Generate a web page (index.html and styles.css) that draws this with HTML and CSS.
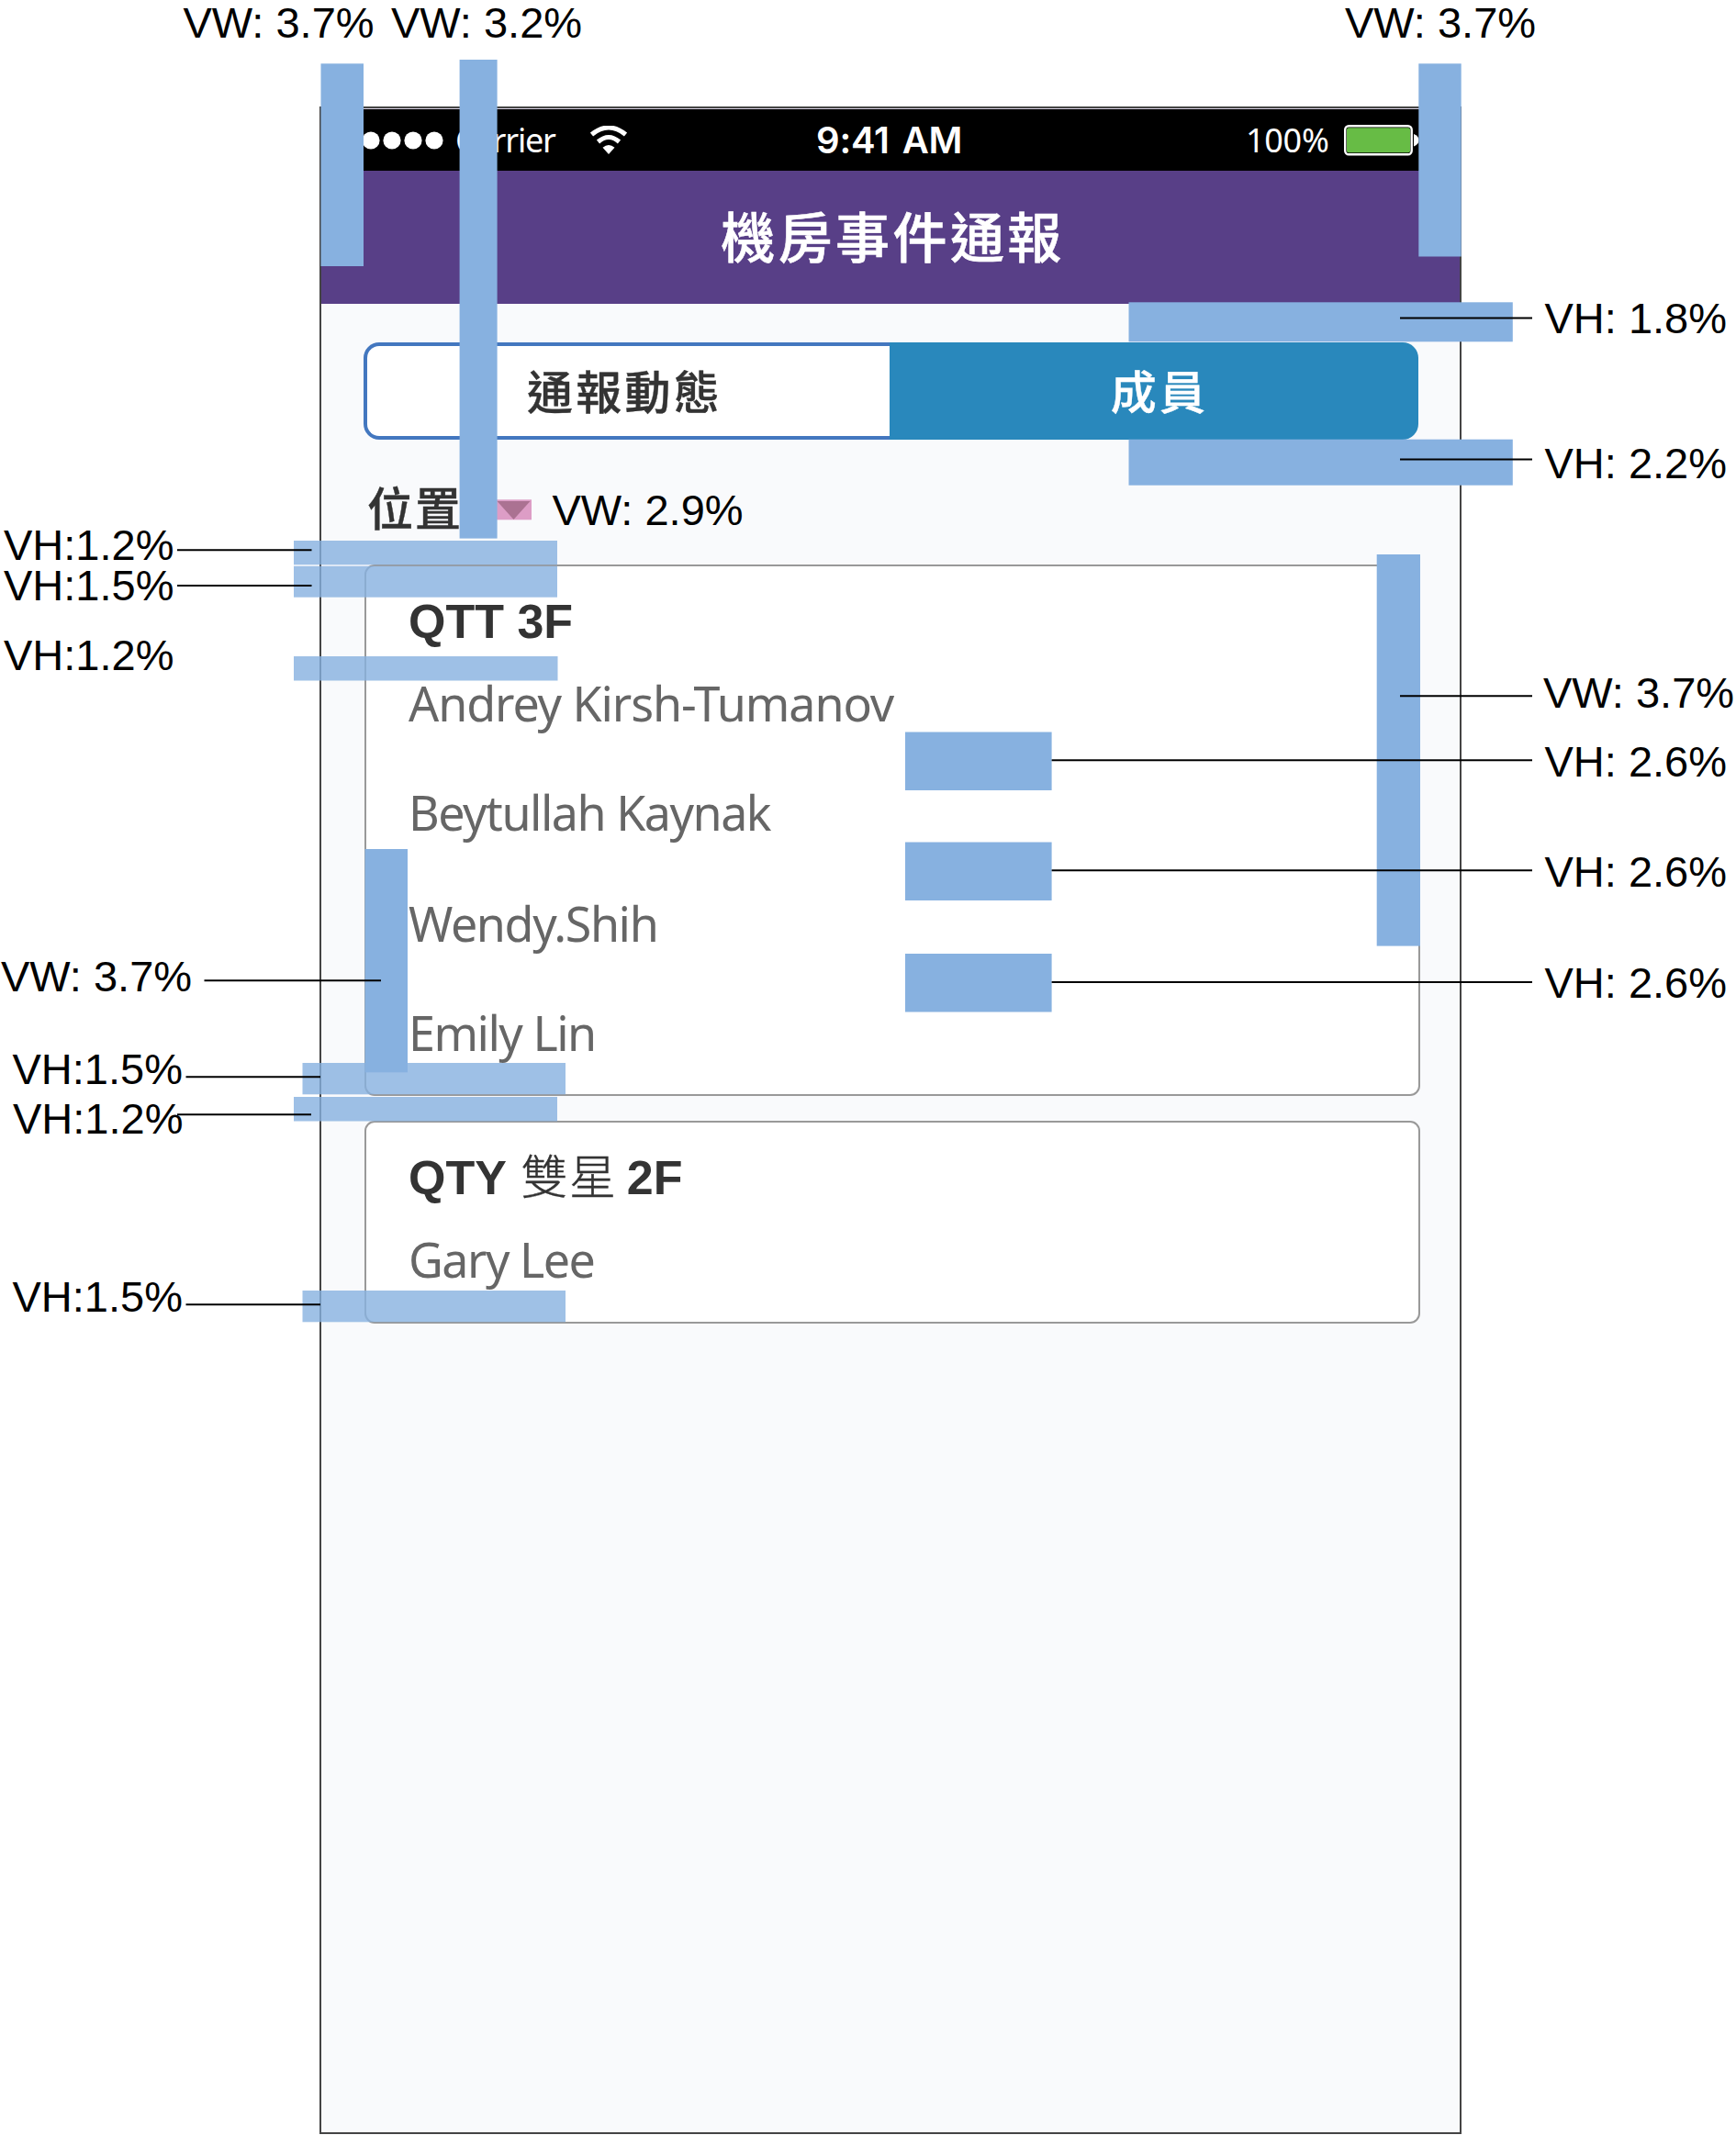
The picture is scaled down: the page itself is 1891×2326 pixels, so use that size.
FILE: index.html
```html
<!DOCTYPE html>
<html lang="zh-Hant">
<head>
<meta charset="utf-8">
<title>機房事件通報</title>
<link rel="stylesheet" href="styles.css">
</head>
<body>
<main class="board">
  <section class="phone">
    <div class="status">
      <svg class="dots" width="112" height="24" viewBox="0 0 112 24" fill="#fff"><circle cx="9" cy="12" r="9.400"/><circle cx="32" cy="12" r="9.600"/><circle cx="55" cy="12" r="9.600"/><circle cx="78" cy="12" r="9.600"/><circle cx="101" cy="12" r="9.600"/></svg>
      <span class="carrier">Carrier</span>
      <svg class="wifi" width="40" height="31" viewBox="0 0 40 31"><path d="M1.500 9.500Q20-5.500 38.500 9.500M8.500 17.500Q20 7.500 31.500 17.500" fill="none" stroke="#fff" stroke-width="5"/><path d="M13.500 23.800Q20 18 26.500 23.800L20 31Z" fill="#fff"/></svg>
      <span class="time">9:41 AM</span>
      <span class="percent">100%</span>
      <svg class="battery" width="84" height="34" viewBox="0 0 84 34"><rect x="1.200" y="1.200" width="72.500" height="31" rx="4" fill="#000" stroke="#fff" stroke-width="2.400"/><rect x="3" y="3.200" width="69" height="27" rx="2" fill="#67bc45"/><path d="M76 10Q81.500 12 81.500 16.700T76 23.500Z" fill="#fff"/></svg>
    </div>
    <h1 class="title">機房事件通報</h1>
    <div class="content">
      <nav class="tabs"><span class="tab">通報動態</span><span class="tab tab-on">成員</span></nav>
      <div class="filter"><span>位置</span></div>
      <article class="card members">
        <h2>QTT 3F</h2>
        <p class="long">Andrey Kirsh-Tumanov</p>
        <p class="second">Beytullah Kaynak</p>
        <p class="third">Wendy.Shih</p>
        <p class="fourth">Emily Lin</p>
      </article>
      <article class="card single">
        <h2>QTY <span class="place">雙星</span> 2F</h2>
        <p>Gary Lee</p>
      </article>
    </div>
  </section>

  <!-- spacing markers -->
  <svg class="markers" width="1891" height="2326" viewBox="0 0 1891 2326">
    <g class="soft">
      <rect x="320" y="589" width="287" height="26.300"/>
      <rect x="320" y="616.700" width="287" height="34"/>
      <rect x="320" y="715" width="287.500" height="26.500"/>
      <rect x="329.500" y="1158" width="286.500" height="34.300"/>
      <rect x="320" y="1195" width="287" height="26.500"/>
      <rect x="329.500" y="1406" width="286.500" height="34.300"/>
    </g>
    <rect class="pink" x="541" y="544.300" width="38" height="22"/>
    <path class="arrow" d="M541.500 546H577.500L559.500 566Z"/>
    <g class="solid">
      <rect x="349.500" y="69.300" width="46.500" height="220.700"/>
      <rect x="500.600" y="65" width="41" height="521.600"/>
      <rect x="1545.300" y="69.300" width="46.400" height="210.200"/>
      <rect x="1229.500" y="329.300" width="418.300" height="43"/>
      <rect x="1229.500" y="478.700" width="418.300" height="50"/>
      <rect x="1499.700" y="604" width="47.300" height="426.600"/>
      <rect x="986" y="797.500" width="159.600" height="63.500"/>
      <rect x="986" y="917.500" width="159.600" height="63.500"/>
      <rect x="986" y="1039" width="159.600" height="63.500"/>
      <rect x="397.500" y="925" width="46.500" height="243.300"/>
    </g>
    <path class="leader" d="M1525 346.500H1669M1525 500.500H1669M1525 758.300H1669M1145.600 828.300H1669M1145.600 948.300H1669M1145.600 1070H1669M193 599.300H339.500M193 638H339.500M222.500 1068.200H415M202.500 1173.300H349M193 1214.200H339M202.500 1421.300H349"/>
  </svg>

  <span class="note n1">VW: 3.7%</span>
  <span class="note n2">VW: 3.2%</span>
  <span class="note n3">VW: 3.7%</span>
  <span class="note n4">VH: 1.8%</span>
  <span class="note n5">VH: 2.2%</span>
  <span class="note n6">VW: 2.9%</span>
  <span class="note n7">VW: 3.7%</span>
  <span class="note n8">VH: 2.6%</span>
  <span class="note n9">VH: 2.6%</span>
  <span class="note n10">VH: 2.6%</span>
  <span class="note n11">VH:1.2%</span>
  <span class="note n12">VH:1.5%</span>
  <span class="note n13">VH:1.2%</span>
  <span class="note n14">VW: 3.7%</span>
  <span class="note n15">VH:1.5%</span>
  <span class="note n16">VH:1.2%</span>
  <span class="note n17">VH:1.5%</span>
</main>
</body>
</html>
```
FILE: styles.css
```css
* { box-sizing: border-box; }
body { margin: 0; background: #fff; font-family: "Liberation Sans", "Noto Sans CJK TC", sans-serif; }
.board { position: relative; width: 1891px; height: 2326px; padding: 116px 0 0 348px; overflow: hidden; }

.phone { width: 1244px; height: 2209px; border: 2px solid #444; background: #f9fafc; }
.status { display: flex; align-items: center; height: 68px; border-top: 1px solid #d9d3e4; background: #000; color: #fff; font-family: "Noto Sans", sans-serif; line-height: 68px; white-space: nowrap; }
.status > * { flex: none; }
.dots { margin-left: 22px; }
.carrier { width: 134px; margin-left: 12px; font-size: 36px; letter-spacing: -1.200px; }
.wifi { margin-left: 13px; }
.time { width: 300px; margin-left: 206px; font-family: Inter, sans-serif; font-size: 40px; font-weight: 600; letter-spacing: -.200px; word-spacing: 4px; }
.percent { width: 107px; margin-left: 168px; font-size: 36px; letter-spacing: -.300px; }
.title { margin: 0; height: 145px; background: #583f87; color: #fff; font: 500 59px/140px "Noto Sans CJK TC", sans-serif; letter-spacing: 3.400px; text-align: center; text-indent: 5px; -webkit-text-stroke: .600px #fff; }
.content { padding: 42px 45px 0 46px; }
.tabs { display: flex; height: 106px; }
.tab { width: 573px; padding-right: 8px; border: 4px solid #4377bf; border-right: 0; border-radius: 17px 0 0 17px; background: #fff; color: #333; font: 500 50px/94px "Noto Sans CJK TC", sans-serif; letter-spacing: 3.200px; text-align: center; -webkit-text-stroke: .400px; }
.tab-on { width: 576px; padding: 0 0 0 12px; border: 0; border-radius: 0 17px 17px 0; background: #2988bc; color: #fff; line-height: 102px; }
.filter { display: flex; height: 136px; padding: 37px 0 0 4px; color: #333; font: 500 50px/70px "Noto Sans CJK TC", sans-serif; letter-spacing: 2px; -webkit-text-stroke: .400px; }
.card { margin: 0 -2px 0 1px; padding-left: 46px; border: 2px solid #999; border-radius: 11px; background: #fff; }
.card h2 { margin: 0 0 29px; color: #333; font-size: 52px; line-height: 60px; }
.card p { margin: 0; color: #666; font: 52px/60px "Noto Sans", sans-serif; letter-spacing: -1.500px; }
.card .long { letter-spacing: -1.100px; }
.card .second { margin-top: 59px; letter-spacing: -1.500px; }
.card .third { margin-top: 61px; letter-spacing: -1.400px; }
.card .fourth { margin-top: 59px; }
.members { height: 579px; padding-top: 30px; }
.single { height: 221px; margin-top: 27px; padding-top: 26px; }
.place { margin: 0 -4px 0 2px; font-family: "Noto Sans CJK TC", sans-serif; font-size: 51px; font-weight: 300; letter-spacing: 1.500px; -webkit-text-stroke: .400px; }

.markers { position: absolute; left: 0; top: 0; }
.soft { fill: #87b1e0; opacity: .8; }
.solid { fill: #87b1e0; }
.pink { fill: #dd9dc6; }
.arrow { fill: #ab7292; }
.leader { fill: none; stroke: #000; stroke-width: 2; }

.note { position: absolute; margin-top: -1px; color: #000; font-size: 47px; line-height: 47px; white-space: nowrap; }
.n1 { left: 199.500px; top: 2px; }
.n2 { left: 426px; top: 2px; }
.n3 { left: 1465px; top: 2px; }
.n4 { left: 1682.500px; top: 324px; }
.n5 { left: 1682.500px; top: 482px; }
.n6 { left: 601.500px; top: 533px; }
.n7 { left: 1681px; top: 732px; }
.n8 { left: 1682.500px; top: 807px; }
.n9 { left: 1682.500px; top: 927px; }
.n10 { left: 1682.500px; top: 1048px; }
.n11 { left: 4px; top: 571px; }
.n12 { left: 4px; top: 615px; }
.n13 { left: 4px; top: 691px; }
.n14 { left: 1px; top: 1041px; }
.n15 { left: 13.500px; top: 1142px; }
.n16 { left: 14px; top: 1196px; }
.n17 { left: 13.500px; top: 1390px; }
```
